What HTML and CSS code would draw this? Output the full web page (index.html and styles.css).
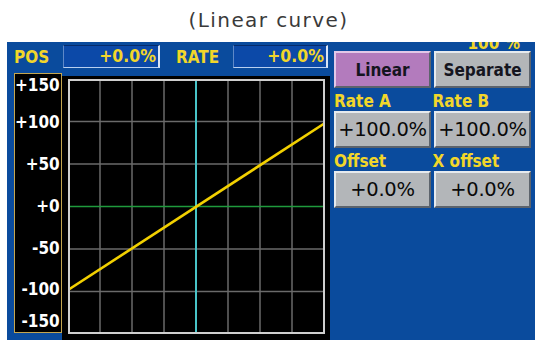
FILE: index.html
```html
<!DOCTYPE html>
<html lang="en">
<head>
    <meta charset="UTF-8">
    <title>Linear curve</title>
    <link rel="stylesheet" href="styles.css">
</head>
<body>
    <div class="caption">(Linear curve)</div>

    <div class="screen">
        <div class="left">
            <div class="header">
                <span class="label pos-label">POS</span>
                <div class="value-box pos-box">+0.0%</div>
                <span class="label rate-label">RATE</span>
                <div class="value-box rate-box">+0.0%</div>
            </div>
            <div class="chart-row">
                <div class="axis">
                    <span class="tick first">+150</span>
                    <span class="tick">+100</span>
                    <span class="tick">+50</span>
                    <span class="tick">+0</span>
                    <span class="tick">-50</span>
                    <span class="tick">-100</span>
                    <span class="tick last">-150</span>
                </div>
                <div class="chart">
                    <svg class="grid" width="257" height="255" viewBox="0 0 257 255">
                        <g stroke="#6a6a6a" stroke-width="1.5">
                            <line x1="32" y1="0" x2="32" y2="255"/>
                            <line x1="64" y1="0" x2="64" y2="255"/>
                            <line x1="96" y1="0" x2="96" y2="255"/>
                            <line x1="160" y1="0" x2="160" y2="255"/>
                            <line x1="192" y1="0" x2="192" y2="255"/>
                            <line x1="224" y1="0" x2="224" y2="255"/>
                            <line x1="0" y1="42.5" x2="257" y2="42.5"/>
                            <line x1="0" y1="85" x2="257" y2="85"/>
                            <line x1="0" y1="170" x2="257" y2="170"/>
                            <line x1="0" y1="212.5" x2="257" y2="212.5"/>
                        </g>
                        <line x1="0" y1="127.5" x2="257" y2="127.5" stroke="#1f9a3c" stroke-width="1.5"/>
                        <line x1="128" y1="0" x2="128" y2="255" stroke="#48c4c8" stroke-width="2"/>
                        <line x1="0" y1="211" x2="257" y2="44" stroke="#f2d000" stroke-width="2.6"/>
                        <rect x="1" y="1" width="255" height="253" fill="none" stroke="#cfcfcf" stroke-width="2"/>
                    </svg>
                </div>
            </div>
        </div>

        <div class="right">
            <div class="scale"><span>100 %</span></div>
            <div class="btn-row">
                <div class="btn purple bold">Linear</div>
                <div class="btn bold">Separate</div>
            </div>
            <div class="label-row">
                <span class="label">Rate A</span>
                <span class="label">Rate B</span>
            </div>
            <div class="btn-row">
                <div class="btn">+100.0%</div>
                <div class="btn">+100.0%</div>
            </div>
            <div class="label-row">
                <span class="label">Offset</span>
                <span class="label">X offset</span>
            </div>
            <div class="btn-row">
                <div class="btn">+0.0%</div>
                <div class="btn">+0.0%</div>
            </div>
        </div>
    </div>
</body>
</html>
```

FILE: styles.css
```css
* {
    margin: 0;
    padding: 0;
    box-sizing: border-box;
}

body {
    background: #ffffff;
    width: 537px;
    height: 340px;
    overflow: hidden;
    font-family: 'DejaVu Sans', sans-serif;
}

.caption {
    height: 42px;
    padding-top: 6px;
    text-align: center;
    font-size: 20px;
    letter-spacing: 1.4px;
    color: #3a3a3a;
    line-height: 28px;
}

.screen {
    margin-left: 7px;
    width: 528px;
    height: 298px;
    background: #0a4b9d;
    display: flex;
    gap: 4px;
    overflow: hidden;
}

.label {
    font-family: 'DejaVu Sans Condensed', 'DejaVu Sans', sans-serif;
    font-weight: bold;
    font-size: 17px;
    color: #f2d62a;
    line-height: 20px;
}

/* left side: header + graph */
.left {
    width: 323px;
    display: flex;
    flex-direction: column;
}

.header {
    height: 31px;
    display: flex;
    align-items: center;
    padding-left: 7px;
    padding-bottom: 2px;
}

.pos-label {
    width: 49px;
}

.rate-label {
    width: 73px;
    padding-left: 16px;
}

.value-box {
    height: 23px;
    background: #0c49a8;
    border-top: 1px solid #062c6c;
    border-left: 1px solid #5e88c8;
    border-bottom: 1px solid #b8cff0;
    border-right: 2px solid #d8e4f6;
    color: #f2d62a;
    font-family: 'DejaVu Sans Condensed', 'DejaVu Sans', sans-serif;
    font-weight: bold;
    font-size: 17.5px;
    line-height: 21px;
    text-align: right;
    padding-right: 2px;
}

.pos-box {
    width: 97px;
}

.rate-box {
    width: 95px;
}

.chart-row {
    display: flex;
    padding-left: 7px;
    flex: 1;
}

.axis {
    width: 48px;
    height: 260px;
    background: #000000;
    border: 1px solid #c4a650;
    display: grid;
    grid-template-rows: 27px 42px 42px 42px 41px 42px 1fr;
    text-align: right;
    padding-right: 3px;
}

.tick {
    font-family: 'DejaVu Sans Condensed', 'DejaVu Sans', sans-serif;
    font-weight: bold;
    font-size: 17px;
    color: #ffffff;
    line-height: 42px;
}

.tick.first {
    line-height: 22px;
}

.tick.last {
    line-height: 22px;
}

.chart {
    flex: 1;
    background: #000000;
    margin-top: 3px;
    padding: 3px 5px 0 6px;
}

.grid {
    display: block;
}

/* right side: buttons */
.right {
    width: 197px;
    display: flex;
    flex-direction: column;
}

/* scale readout, clipped by the top of the screen */
.scale {
    height: 9px;
    display: flex;
    align-items: flex-end;
    justify-content: flex-end;
    padding-right: 11px;
    overflow: hidden;
}

.scale span {
    font-family: 'DejaVu Sans Condensed', 'DejaVu Sans', sans-serif;
    font-weight: bold;
    font-size: 17px;
    line-height: 17px;
    color: #f2d62a;
    margin-bottom: -1px;
}

.btn-row {
    display: flex;
    gap: 3px;
}

.btn {
    width: 97px;
    height: 37px;
    background: #b3b6b9;
    border-top: 2px solid #e6eaee;
    border-left: 2px solid #e6eaee;
    border-bottom: 2px solid #5c636c;
    border-right: 2px solid #5c636c;
    display: flex;
    align-items: center;
    justify-content: center;
    font-size: 19.5px;
    color: #0a0a0a;
    letter-spacing: -0.3px;
}

.btn.bold {
    font-family: 'DejaVu Sans Condensed', 'DejaVu Sans', sans-serif;
    font-weight: bold;
    font-size: 17px;
    letter-spacing: 0;
    color: #15151f;
}

.btn.purple {
    background: #b37bbd;
    border-top-color: #e2c8e8;
    border-left-color: #e2c8e8;
}

.label-row {
    height: 23px;
    display: flex;
    align-items: center;
    padding-top: 2px;
}

.label-row .label {
    width: 100px;
}
```
